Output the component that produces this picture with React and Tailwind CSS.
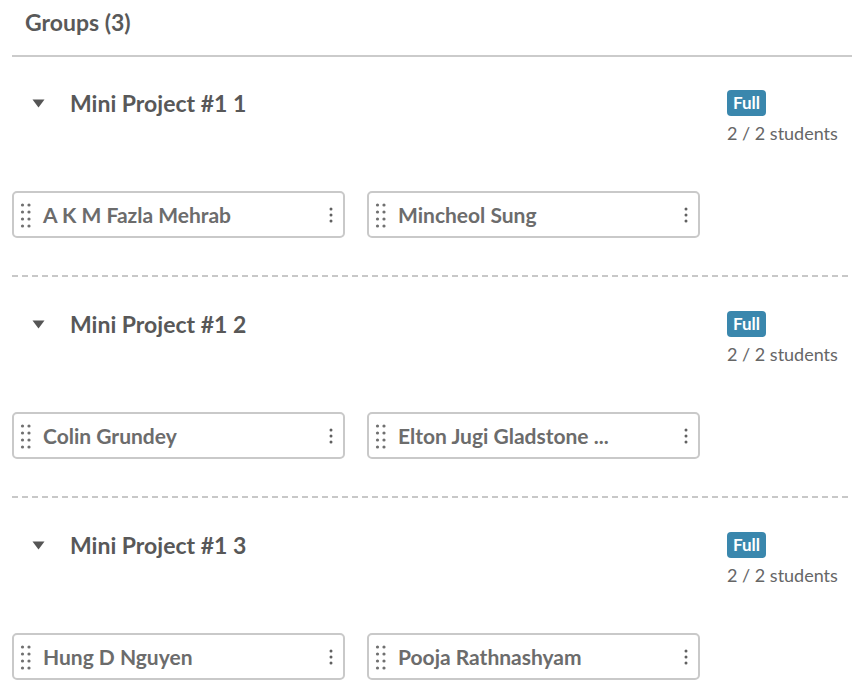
import React from "react";

const groups = [
  { name: "Mini Project #1 1", members: ["A K M Fazla Mehrab", "Mincheol Sung"] },
  { name: "Mini Project #1 2", members: ["Colin Grundey", "Elton Jugi Gladstone ..."] },
  { name: "Mini Project #1 3", members: ["Hung D Nguyen", "Pooja Rathnashyam"] },
];

const DragHandle = () => (
  <svg width="11" height="26" viewBox="0 0 11 26" className="shrink-0">
    {[3, 10, 17, 24].map((y) => (
      <g key={y} fill="#707070">
        <circle cx="2.5" cy={y} r="1.6" />
        <circle cx="9" cy={y} r="1.6" />
      </g>
    ))}
  </svg>
);

const Kebab = () => (
  <svg width="4" height="16" viewBox="0 0 4 16" className="shrink-0">
    <g fill="#606060">
      <circle cx="2" cy="2" r="1.5" />
      <circle cx="2" cy="8" r="1.5" />
      <circle cx="2" cy="14" r="1.5" />
    </g>
  </svg>
);

const MemberCard = ({ name }) => (
  <div className="w-[333px] h-[47px] border-2 border-[#c9c9c9] rounded-[5px] flex items-center pl-[6px] pr-[10px]">
    <DragHandle />
    <span className="ml-[12px] text-[21px] font-bold text-[#6c6c6c] leading-none whitespace-nowrap">
      {name}
    </span>
    <div className="ml-auto">
      <Kebab />
    </div>
  </div>
);

const Group = ({ group, first, last }) => (
  <div className={first ? "pt-[33px]" : "pt-[34px]"}>
    <div className="h-[101px] flex items-start">
      <div className="w-[58px] h-[27px] flex items-center pl-[20px]">
        <svg width="13" height="9" viewBox="0 0 13 9">
          <path d="M0.5 0.5 L12.5 0.5 L6.5 8.5 Z" fill="#555" />
        </svg>
      </div>
      <div className="text-[23px] font-bold text-[#585858] leading-[27px]">{group.name}</div>
      <div className="ml-auto w-[125px] flex flex-col items-start">
        <span className="h-[26px] px-[6px] rounded-[4px] bg-[#3a87ad] text-white text-[17px] font-bold flex items-center">
          Full
        </span>
        <span className="mt-[6px] text-[18px] text-[#666] leading-[22px]">2 / 2 students</span>
      </div>
    </div>
    <div className="flex gap-[22px]">
      {group.members.map((m) => (
        <MemberCard key={m} name={m} />
      ))}
    </div>
    {!last && (
      <div className="mt-[37px] h-[2px] bg-[image:repeating-linear-gradient(to_right,#c8c8c8_0,#c8c8c8_6px,transparent_6px,transparent_10px)]" />
    )}
  </div>
);

const App = () => {
  return (
    <div className="w-[860px] h-[688px] bg-white overflow-hidden font-['Lato',sans-serif]">
      <div className="h-[55px] pl-[25px] pt-[8px]">
        <div className="text-[23px] font-bold text-[#595959] leading-[28px]">Groups (3)</div>
      </div>
      <div className="ml-[12px] mr-[8px]">
        <div className="h-[2px] bg-[#cbcbcb]" />
        {groups.map((g, i) => (
          <Group key={g.name} group={g} first={i === 0} last={i === groups.length - 1} />
        ))}
      </div>
    </div>
  );
};

export default App;
